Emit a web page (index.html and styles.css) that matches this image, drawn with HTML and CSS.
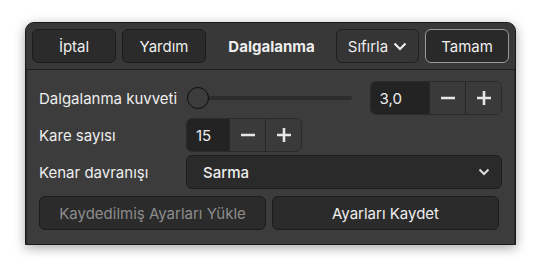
FILE: index.html
```html
<!DOCTYPE html>
<html lang="tr">
<head>
    <meta charset="UTF-8">
    <title>Dalgalanma</title>
    <link rel="stylesheet" href="styles.css">
</head>
<body>
    <div class="window">
        <div class="header">
            <button class="btn">İptal</button>
            <button class="btn">Yardım</button>
            <div class="title">Dalgalanma</div>
            <button class="btn reset">Sıfırla
                <svg width="14" height="10" viewBox="0 0 14 10"><path d="M1.5 2.5 L7 8 L12.5 2.5" fill="none" stroke="#eee" stroke-width="2.2"/></svg>
            </button>
            <button class="btn ok">Tamam</button>
        </div>
        <div class="content">
            <div class="row">
                <span class="label">Dalgalanma kuvveti</span>
                <div class="slider">
                    <div class="track"></div>
                    <div class="knob"></div>
                </div>
                <div class="spin wide">
                    <span class="entry">3,0</span>
                    <span class="step"><svg width="14" height="14" viewBox="0 0 14 14"><path d="M0 7 H14" stroke="#e6e6e6" stroke-width="2.6"/></svg></span>
                    <span class="step"><svg width="14" height="14" viewBox="0 0 14 14"><path d="M0 7 H14 M7 0 V14" stroke="#e6e6e6" stroke-width="2.6"/></svg></span>
                </div>
            </div>
            <div class="row">
                <span class="label">Kare sayısı</span>
                <div class="spin">
                    <span class="entry">15</span>
                    <span class="step"><svg width="14" height="14" viewBox="0 0 14 14"><path d="M0 7 H14" stroke="#e6e6e6" stroke-width="2.6"/></svg></span>
                    <span class="step"><svg width="14" height="14" viewBox="0 0 14 14"><path d="M0 7 H14 M7 0 V14" stroke="#e6e6e6" stroke-width="2.6"/></svg></span>
                </div>
            </div>
            <div class="row">
                <span class="label">Kenar davranışı</span>
                <div class="combo">
                    <span>Sarma</span>
                    <svg width="12" height="8" viewBox="0 0 12 8"><path d="M1.5 1.5 L6 6 L10.5 1.5" fill="none" stroke="#ddd" stroke-width="2"/></svg>
                </div>
            </div>
            <div class="actions">
                <button class="btn big disabled">Kaydedilmiş Ayarları Yükle</button>
                <button class="btn big">Ayarları Kaydet</button>
            </div>
        </div>
    </div>
</body>
</html>
```

FILE: styles.css
```css
body { margin: 0; padding: 22px 25px; background: #fff; font-family: Inter, "Noto Sans", sans-serif; font-size: 15px; color: #eeeeee; }
.window { width: 491px; height: 223px; box-sizing: border-box; border: 1px solid #1b1b1b; border-radius: 9px 9px 0 0; background: #3a3a3a; box-shadow: 0 3px 12px rgba(0, 0, 0, 0.35); overflow: hidden; display: flex; flex-direction: column; }
.header { height: 47px; box-sizing: border-box; border-bottom: 1px solid #1f1f1f; background: #383838; display: flex; align-items: center; padding: 0 6px; }
.btn { font-family: inherit; font-size: 15px; color: #eeeeee; background: #2b2b2b; border: 1px solid #1c1c1c; border-radius: 6px; height: 34px; width: 84px; padding: 0; margin: 0; display: flex; align-items: center; justify-content: center; gap: 5px; }
.header .btn + .btn { margin-left: 6px; }
.title { flex: 1; text-align: center; font-weight: bold; font-size: 15px; padding-left: 1px; }
.reset { width: 83px; background: #353535; border-color: #202020; }
.header .ok { margin-left: 7px; border: 1px solid #9a9a9a; background: #292929; }
.content { flex: 1; padding: 11px 12px 0 12px; display: flex; flex-direction: column; gap: 3px; background: #3c3c3c; border-left: 1px solid #2a2a2a; border-right: 1px solid #2a2a2a; }
.row { display: flex; align-items: center; height: 34px; }
.label { width: 147px; }
.slider { position: relative; width: 165px; height: 22px; margin-right: 18px; margin-left: 2px; }
.track { position: absolute; left: 8px; right: 0; top: 9px; height: 4px; border-radius: 2px; background: #2c2c2c; }
.knob { position: absolute; left: 0; top: 0; width: 20px; height: 20px; border-radius: 50%; background: #3c3c3c; border: 1px solid #0e0e0e; }
.spin { display: flex; height: 34px; width: 116px; box-sizing: border-box; border-radius: 6px; overflow: hidden; border: 1px solid #2a2a2a; }
.spin.wide { width: 133px; }
.entry { flex: 1; background: #232323; display: flex; align-items: center; padding-left: 9px; border-right: 1px solid #2a2a2a; }
.step { width: 35px; background: #3a3a3a; display: flex; align-items: center; justify-content: center; }
.step + .step { border-left: 1px solid #252525; }
.combo { flex: 1; height: 34px; box-sizing: border-box; background: #2a2a2a; border: 1px solid #1e1e1e; border-radius: 6px; display: flex; align-items: center; justify-content: space-between; padding: 0 11px 0 16px; font-weight: 500; }
.actions { display: flex; gap: 6px; margin-top: 4px; padding-right: 3px; }
.btn.big { flex: 1; width: auto; }
.btn.disabled { color: #8c8c8c; }
```
